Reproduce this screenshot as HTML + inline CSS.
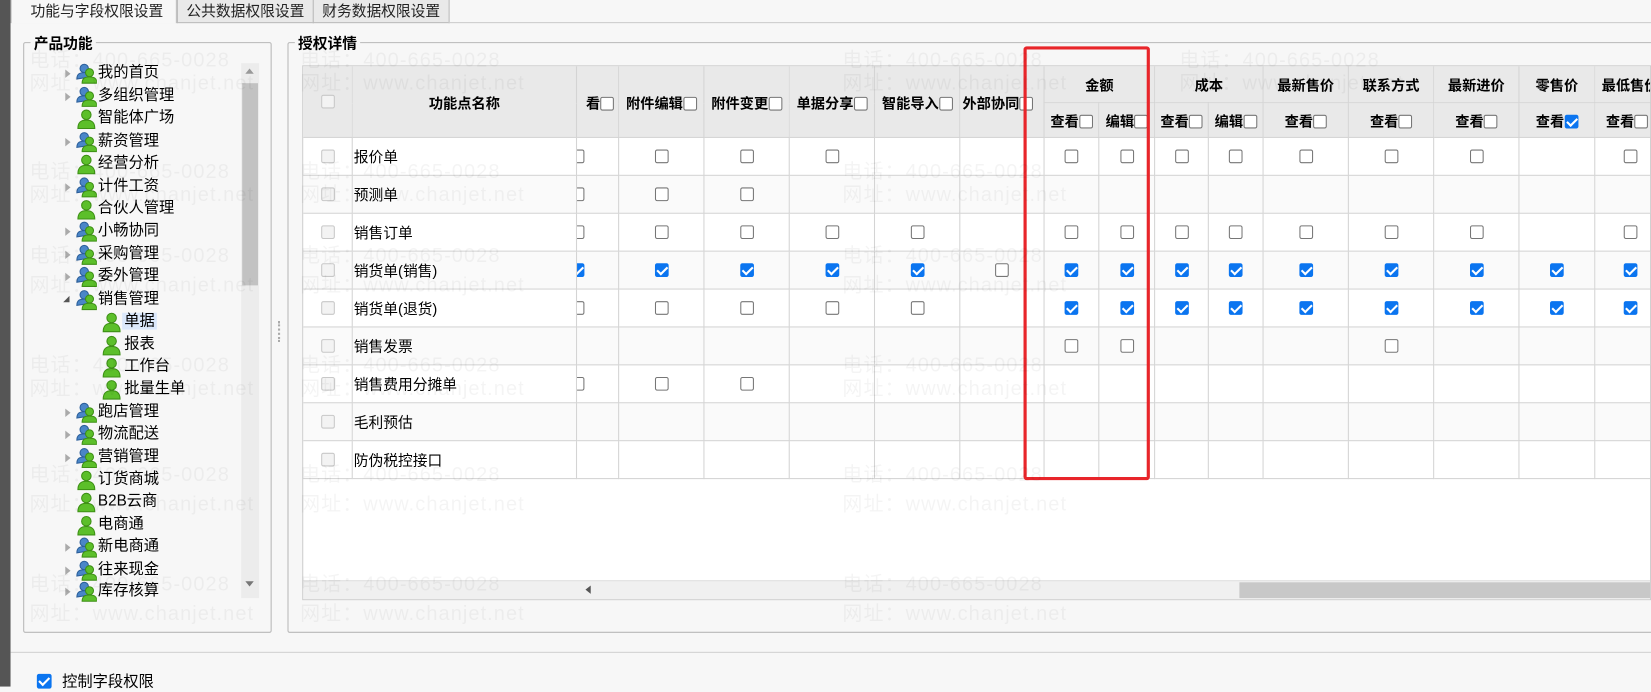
<!DOCTYPE html>
<html><head><meta charset="utf-8"><style>
*{box-sizing:border-box;margin:0;padding:0}
html,body{width:1651px;height:686px;overflow:hidden;background:#f7f7f7}
#w{position:absolute;left:0;top:0;width:1568px;height:652px;transform:scale(1.0530);transform-origin:0 0;font-family:"Liberation Sans","Noto Sans CJK SC",sans-serif;font-size:13.5px;color:#000}
.abs{position:absolute}
.tab{position:absolute;top:0;height:22px;border:1px solid #bbb;border-top:none;background:#e9e9e9;font-size:14px;line-height:20px;padding:0 8px;color:#222;white-space:nowrap}
.fs{position:absolute;border:1px solid #b8b8b8;border-radius:2px}
.lg{position:absolute;top:-10px;background:#f7f7f7;padding:0 3px;font-weight:bold;font-size:14px}
.ti{position:absolute;height:21px;line-height:21px;font-size:14.5px;white-space:nowrap}
.tri{position:absolute;width:0;height:0;border-left:5px solid #aaa;border-top:4px solid transparent;border-bottom:4px solid transparent;top:7px}
.tri2{position:absolute;top:7px;width:0;height:0;border-right:6px solid #555;border-top:6px solid transparent}
svg.ic{position:absolute;top:1px}
table{border-collapse:collapse;table-layout:fixed;position:absolute;background:#fff;width:1364px}
td,th{border:1px solid #d4d4d4;text-align:center;vertical-align:middle;padding:0;overflow:hidden;white-space:nowrap}
th{background:#e9e9e9;font-weight:bold;font-size:13.5px}
td{height:36px}
td.n{text-align:left;padding-left:1px;font-size:14px}
.c,.k{display:inline-block;width:13px;height:13px;border:1px solid #767676;border-radius:2px;background:#fff;vertical-align:-2px}
.k{background:#0b75f0;border-color:#0b75f0;position:relative}
.k:after{content:"";position:absolute;left:3px;top:0px;width:4px;height:8px;border:solid #fff;border-width:0 2px 2px 0;transform:rotate(45deg)}
.g{border-color:#c8c8c8;background:#f3f3f3}
tr.alt td{background:#fafafa}
.wm{position:absolute;color:rgba(0,0,0,0.045);font-size:19px;font-family:"Liberation Sans","Noto Sans CJK SC",sans-serif;letter-spacing:1px;white-space:nowrap;pointer-events:none}
</style></head><body><div id="w">
<div class="abs" style="left:0;top:0;width:10px;height:652px;background:#555"></div>
<div class="tab" style="left:10px;background:#f7f7f7;border-bottom:none;width:158px;padding-left:18px">功能与字段权限设置</div>
<div class="tab" style="left:168px">公共数据权限设置</div>
<div class="tab" style="left:297px">财务数据权限设置</div>
<div class="abs" style="left:426px;top:21px;right:0;border-top:1px solid #ccc"></div>

<div class="fs" style="left:22px;top:40px;width:236px;height:561px"><span class="lg" style="left:6px">产品功能</span></div>
<div class="abs" style="left:229px;top:60px;width:17px;height:508px;background:#ececec"></div>
<div class="abs" style="left:230px;top:79px;width:15px;height:192px;background:#c2c2c2"></div>
<div class="abs" style="left:233px;top:65px;border-bottom:5px solid #999;border-left:4px solid transparent;border-right:4px solid transparent"></div>
<div class="abs" style="left:233px;top:552px;border-top:5px solid #777;border-left:4px solid transparent;border-right:4px solid transparent"></div>

<svg width="0" height="0" style="position:absolute"><defs>
<symbol id="p" viewBox="0 0 20 20"><circle cx="10" cy="6" r="4.5" fill="#5cbf2a" stroke="#3d8f15"/><path d="M2 19c0-6 3-8 8-8s8 2 8 8z" fill="#5cbf2a" stroke="#3d8f15"/></symbol>
<symbol id="gp" viewBox="0 0 20 20"><circle cx="8" cy="5" r="4" fill="#4a86c8" stroke="#2c5f9a"/><path d="M1 15c0-5 3-6 7-6s6 1 6 4z" fill="#4a86c8" stroke="#2c5f9a"/><circle cx="13" cy="9" r="3.8" fill="#5cbf2a" stroke="#3d8f15"/><path d="M6 19c0-5 3-6 7-6s7 1 7 6z" fill="#5cbf2a" stroke="#3d8f15"/></symbol>
</defs></svg>

<div class="ti" style="left:62px;top:59px"><i class="tri" style="left:0"></i><svg class="ic" style="left:10px" width="20" height="20"><use href="#gp"/></svg><span style="margin-left:31px">我的首页</span></div>
<div class="ti" style="left:62px;top:81px"><i class="tri" style="left:0"></i><svg class="ic" style="left:10px" width="20" height="20"><use href="#gp"/></svg><span style="margin-left:31px">多组织管理</span></div>
<div class="ti" style="left:62px;top:102px"><svg class="ic" style="left:10px" width="20" height="20"><use href="#p"/></svg><span style="margin-left:31px">智能体广场</span></div>
<div class="ti" style="left:62px;top:124px"><i class="tri" style="left:0"></i><svg class="ic" style="left:10px" width="20" height="20"><use href="#gp"/></svg><span style="margin-left:31px">薪资管理</span></div>
<div class="ti" style="left:62px;top:145px"><svg class="ic" style="left:10px" width="20" height="20"><use href="#p"/></svg><span style="margin-left:31px">经营分析</span></div>
<div class="ti" style="left:62px;top:167px"><i class="tri" style="left:0"></i><svg class="ic" style="left:10px" width="20" height="20"><use href="#gp"/></svg><span style="margin-left:31px">计件工资</span></div>
<div class="ti" style="left:62px;top:188px"><svg class="ic" style="left:10px" width="20" height="20"><use href="#p"/></svg><span style="margin-left:31px">合伙人管理</span></div>
<div class="ti" style="left:62px;top:209px"><i class="tri" style="left:0"></i><svg class="ic" style="left:10px" width="20" height="20"><use href="#gp"/></svg><span style="margin-left:31px">小畅协同</span></div>
<div class="ti" style="left:62px;top:231px"><i class="tri" style="left:0"></i><svg class="ic" style="left:10px" width="20" height="20"><use href="#gp"/></svg><span style="margin-left:31px">采购管理</span></div>
<div class="ti" style="left:62px;top:252px"><i class="tri" style="left:0"></i><svg class="ic" style="left:10px" width="20" height="20"><use href="#gp"/></svg><span style="margin-left:31px">委外管理</span></div>
<div class="ti" style="left:62px;top:274px"><i class="tri2" style="left:-2px"></i><svg class="ic" style="left:10px" width="20" height="20"><use href="#gp"/></svg><span style="margin-left:31px">销售管理</span></div>
<div class="ti" style="left:96px;top:295px"><svg class="ic" style="left:0" width="20" height="20"><use href="#p"/></svg><span style="margin-left:20px;background:#dbe8fb;padding:0 2px">单据</span></div>
<div class="ti" style="left:96px;top:317px"><svg class="ic" style="left:0" width="20" height="20"><use href="#p"/></svg><span style="margin-left:22px">报表</span></div>
<div class="ti" style="left:96px;top:338px"><svg class="ic" style="left:0" width="20" height="20"><use href="#p"/></svg><span style="margin-left:22px">工作台</span></div>
<div class="ti" style="left:96px;top:359px"><svg class="ic" style="left:0" width="20" height="20"><use href="#p"/></svg><span style="margin-left:22px">批量生单</span></div>
<div class="ti" style="left:62px;top:381px"><i class="tri" style="left:0"></i><svg class="ic" style="left:10px" width="20" height="20"><use href="#gp"/></svg><span style="margin-left:31px">跑店管理</span></div>
<div class="ti" style="left:62px;top:402px"><i class="tri" style="left:0"></i><svg class="ic" style="left:10px" width="20" height="20"><use href="#gp"/></svg><span style="margin-left:31px">物流配送</span></div>
<div class="ti" style="left:62px;top:424px"><i class="tri" style="left:0"></i><svg class="ic" style="left:10px" width="20" height="20"><use href="#gp"/></svg><span style="margin-left:31px">营销管理</span></div>
<div class="ti" style="left:62px;top:445px"><svg class="ic" style="left:10px" width="20" height="20"><use href="#p"/></svg><span style="margin-left:31px">订货商城</span></div>
<div class="ti" style="left:62px;top:466px"><svg class="ic" style="left:10px" width="20" height="20"><use href="#p"/></svg><span style="margin-left:31px">B2B云商</span></div>
<div class="ti" style="left:62px;top:488px"><svg class="ic" style="left:10px" width="20" height="20"><use href="#p"/></svg><span style="margin-left:31px">电商通</span></div>
<div class="ti" style="left:62px;top:509px"><i class="tri" style="left:0"></i><svg class="ic" style="left:10px" width="20" height="20"><use href="#gp"/></svg><span style="margin-left:31px">新电商通</span></div>
<div class="ti" style="left:62px;top:531px"><i class="tri" style="left:0"></i><svg class="ic" style="left:10px" width="20" height="20"><use href="#gp"/></svg><span style="margin-left:31px">往来现金</span></div>
<div class="ti" style="left:62px;top:551px"><i class="tri" style="left:0"></i><svg class="ic" style="left:10px" width="20" height="20"><use href="#gp"/></svg><span style="margin-left:31px">库存核算</span></div>

<div class="abs" style="left:264px;top:305px;height:20px;border-left:2px dotted #aaa"></div>

<div class="fs" style="left:273px;top:40px;width:1300px;height:561px"><span class="lg" style="left:6px">授权详情</span></div>
<div class="abs" style="left:287px;top:62px;width:1281px;height:508px;background:#fff;border:1px solid #ccc;overflow:hidden">
<table style="left:-1px;top:-1px">
<colgroup><col style="width:47px"><col style="width:213px"><col style="width:40px"><col style="width:81px"><col style="width:81px"><col style="width:81px"><col style="width:81px"><col style="width:80px"><col style="width:52px"><col style="width:53px"><col style="width:51px"><col style="width:52px"><col style="width:81px"><col style="width:81px"><col style="width:81px"><col style="width:72px"><col style="width:137px"></colgroup>
<tr style="height:35px"><th rowspan="2"><span class="c g"></span></th><th rowspan="2">功能点名称</th><th rowspan="2" style="text-align:right;padding-right:4px">看<span class="c"></span></th><th rowspan="2">附件编辑<span class="c"></span></th><th rowspan="2">附件变更<span class="c"></span></th><th rowspan="2">单据分享<span class="c"></span></th><th rowspan="2">智能导入<span class="c"></span></th><th rowspan="2" style="text-align:left;padding-left:2px">外部协同<span class="c"></span></th><th colspan="2">金额</th><th colspan="2">成本</th><th>最新售价</th><th>联系方式</th><th>最新进价</th><th>零售价</th><th style="text-align:left;padding-left:6px">最低售价</th></tr>
<tr style="height:33px"><th>查看<span class="c"></span></th><th>编辑<span class="c"></span></th><th>查看<span class="c"></span></th><th>编辑<span class="c"></span></th><th>查看<span class="c"></span></th><th>查看<span class="c"></span></th><th>查看<span class="c"></span></th><th>查看<span class="k"></span></th><th style="text-align:left;padding-left:10px">查看<span class="c"></span></th></tr>
<tr><td><span class="c g"></span></td><td class="n">报价单</td><td style="text-align:left"><span class="c" style="margin-left:-6px"></span></td><td><span class="c"></span></td><td><span class="c"></span></td><td><span class="c"></span></td><td></td><td></td><td><span class="c"></span></td><td><span class="c"></span></td><td><span class="c"></span></td><td><span class="c"></span></td><td><span class="c"></span></td><td><span class="c"></span></td><td><span class="c"></span></td><td></td><td style="text-align:left;padding-left:27px"><span class="c"></span></td></tr>
<tr class="alt"><td><span class="c g"></span></td><td class="n">预测单</td><td style="text-align:left"><span class="c" style="margin-left:-6px"></span></td><td><span class="c"></span></td><td><span class="c"></span></td><td></td><td></td><td></td><td></td><td></td><td></td><td></td><td></td><td></td><td></td><td></td><td></td></tr>
<tr><td><span class="c g"></span></td><td class="n">销售订单</td><td style="text-align:left"><span class="c" style="margin-left:-6px"></span></td><td><span class="c"></span></td><td><span class="c"></span></td><td><span class="c"></span></td><td><span class="c"></span></td><td></td><td><span class="c"></span></td><td><span class="c"></span></td><td><span class="c"></span></td><td><span class="c"></span></td><td><span class="c"></span></td><td><span class="c"></span></td><td><span class="c"></span></td><td></td><td style="text-align:left;padding-left:27px"><span class="c"></span></td></tr>
<tr class="alt"><td><span class="c g"></span></td><td class="n">销货单(销售)</td><td style="text-align:left"><span class="k" style="margin-left:-6px"></span></td><td><span class="k"></span></td><td><span class="k"></span></td><td><span class="k"></span></td><td><span class="k"></span></td><td><span class="c"></span></td><td><span class="k"></span></td><td><span class="k"></span></td><td><span class="k"></span></td><td><span class="k"></span></td><td><span class="k"></span></td><td><span class="k"></span></td><td><span class="k"></span></td><td><span class="k"></span></td><td style="text-align:left;padding-left:27px"><span class="k"></span></td></tr>
<tr><td><span class="c g"></span></td><td class="n">销货单(退货)</td><td style="text-align:left"><span class="c" style="margin-left:-6px"></span></td><td><span class="c"></span></td><td><span class="c"></span></td><td><span class="c"></span></td><td><span class="c"></span></td><td></td><td><span class="k"></span></td><td><span class="k"></span></td><td><span class="k"></span></td><td><span class="k"></span></td><td><span class="k"></span></td><td><span class="k"></span></td><td><span class="k"></span></td><td><span class="k"></span></td><td style="text-align:left;padding-left:27px"><span class="k"></span></td></tr>
<tr class="alt"><td><span class="c g"></span></td><td class="n">销售发票</td><td></td><td></td><td></td><td></td><td></td><td></td><td><span class="c"></span></td><td><span class="c"></span></td><td></td><td></td><td></td><td><span class="c"></span></td><td></td><td></td><td></td></tr>
<tr><td><span class="c g"></span></td><td class="n">销售费用分摊单</td><td style="text-align:left"><span class="c" style="margin-left:-6px"></span></td><td><span class="c"></span></td><td><span class="c"></span></td><td></td><td></td><td></td><td></td><td></td><td></td><td></td><td></td><td></td><td></td><td></td><td></td></tr>
<tr class="alt"><td><span class="c g"></span></td><td class="n">毛利预估</td><td></td><td></td><td></td><td></td><td></td><td></td><td></td><td></td><td></td><td></td><td></td><td></td><td></td><td></td><td></td></tr>
<tr><td><span class="c g"></span></td><td class="n">防伪税控接口</td><td></td><td></td><td></td><td></td><td></td><td></td><td></td><td></td><td></td><td></td><td></td><td></td><td></td><td></td><td></td></tr>
</table>
<div class="abs" style="left:0;top:488px;width:1281px;height:19px;background:#f0f0f0;border-top:1px solid #e0e0e0"></div>
<div class="abs" style="left:889px;top:490px;width:392px;height:15px;background:#c8c8c8"></div>
<div class="abs" style="left:268px;top:493px;border-right:5px solid #555;border-top:4px solid transparent;border-bottom:4px solid transparent"></div>
</div>

<div class="abs" style="left:972px;top:44px;width:120px;height:412px;border:3px solid #e8252a;border-radius:3px"></div>

<div class="abs" style="left:10px;top:619px;right:0;border-top:1px solid #d0d0d0"></div>
<div class="abs" style="left:35px;top:636px"><span class="k" style="width:14px;height:14px"></span><span style="margin-left:10px;font-size:14.5px">控制字段权限</span></div>

<div class="wm" style="left:28px;top:42px">电话：400-665-0028</div><div class="wm" style="left:28px;top:64px">网址：www.chanjet.net</div>
<div class="wm" style="left:285px;top:42px">电话：400-665-0028</div><div class="wm" style="left:285px;top:64px">网址：www.chanjet.net</div>
<div class="wm" style="left:800px;top:42px">电话：400-665-0028</div><div class="wm" style="left:800px;top:64px">网址：www.chanjet.net</div>
<div class="wm" style="left:1120px;top:42px">电话：400-665-0028</div><div class="wm" style="left:1120px;top:64px">网址：www.chanjet.net</div>
<div class="wm" style="left:28px;top:148px">电话：400-665-0028</div><div class="wm" style="left:28px;top:170px">网址：www.chanjet.net</div>
<div class="wm" style="left:285px;top:148px">电话：400-665-0028</div><div class="wm" style="left:285px;top:170px">网址：www.chanjet.net</div>
<div class="wm" style="left:800px;top:148px">电话：400-665-0028</div><div class="wm" style="left:800px;top:170px">网址：www.chanjet.net</div>
<div class="wm" style="left:28px;top:228px">电话：400-665-0028</div><div class="wm" style="left:28px;top:256px">网址：www.chanjet.net</div>
<div class="wm" style="left:285px;top:228px">电话：400-665-0028</div><div class="wm" style="left:285px;top:256px">网址：www.chanjet.net</div>
<div class="wm" style="left:800px;top:228px">电话：400-665-0028</div><div class="wm" style="left:800px;top:256px">网址：www.chanjet.net</div>
<div class="wm" style="left:28px;top:332px">电话：400-665-0028</div><div class="wm" style="left:28px;top:354px">网址：www.chanjet.net</div>
<div class="wm" style="left:285px;top:332px">电话：400-665-0028</div><div class="wm" style="left:285px;top:354px">网址：www.chanjet.net</div>
<div class="wm" style="left:800px;top:332px">电话：400-665-0028</div><div class="wm" style="left:800px;top:354px">网址：www.chanjet.net</div>
<div class="wm" style="left:28px;top:436px">电话：400-665-0028</div><div class="wm" style="left:28px;top:464px">网址：www.chanjet.net</div>
<div class="wm" style="left:285px;top:436px">电话：400-665-0028</div><div class="wm" style="left:285px;top:464px">网址：www.chanjet.net</div>
<div class="wm" style="left:800px;top:436px">电话：400-665-0028</div><div class="wm" style="left:800px;top:464px">网址：www.chanjet.net</div>
<div class="wm" style="left:28px;top:540px">电话：400-665-0028</div><div class="wm" style="left:28px;top:568px">网址：www.chanjet.net</div>
<div class="wm" style="left:285px;top:540px">电话：400-665-0028</div><div class="wm" style="left:285px;top:568px">网址：www.chanjet.net</div>
<div class="wm" style="left:800px;top:540px">电话：400-665-0028</div><div class="wm" style="left:800px;top:568px">网址：www.chanjet.net</div>
</div></body></html>
